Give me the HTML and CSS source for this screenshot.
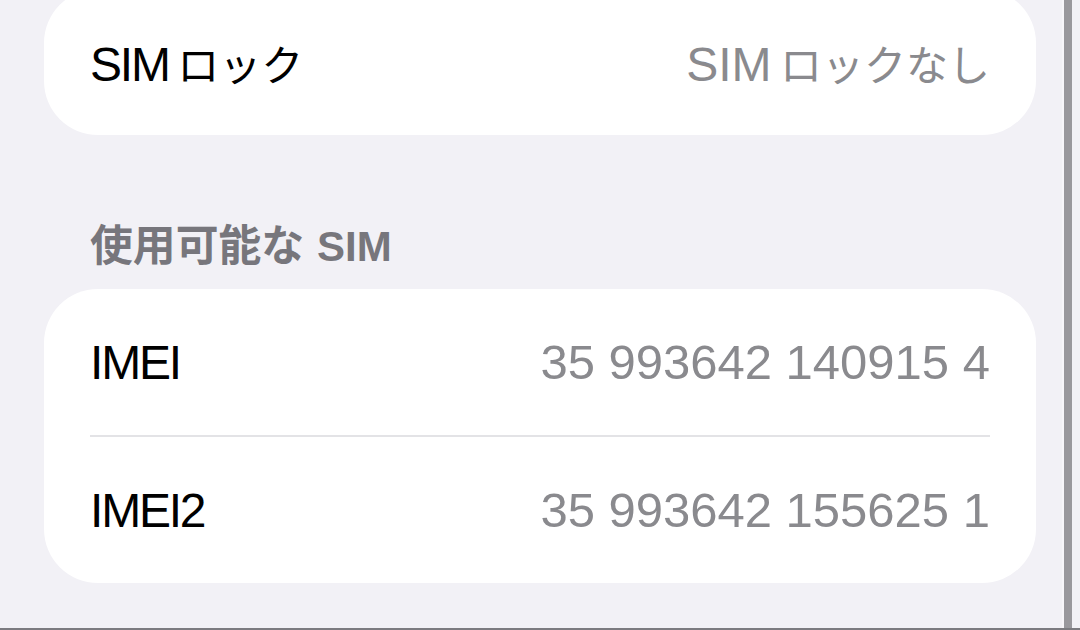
FILE: index.html
```html
<!DOCTYPE html>
<html lang="ja">
<head>
<meta charset="utf-8">
<title>SIM</title>
<link rel="stylesheet" href="styles.css">
</head>
<body>
<div class="screen">
  <main class="content">
    <section class="group group-first">
      <div class="row">
        <span class="label">SIM<span class="ja">ロック</span></span>
        <span class="value">SIM<span class="ja">ロックなし</span></span>
      </div>
    </section>

    <h2 class="section-title"><span class="ja">使用可能な</span>SIM</h2>

    <section class="group">
      <div class="row">
        <span class="label">IMEI</span>
        <span class="value num">35 993642 140915 4</span>
      </div>
      <div class="divider"></div>
      <div class="row">
        <span class="label">IMEI2</span>
        <span class="value num">35 993642 155625 1</span>
      </div>
    </section>
  </main>
  <div class="edge"></div>
</div>
</body>
</html>
```

FILE: styles.css
```css
* {
  box-sizing: border-box;
}

html, body {
  margin: 0;
  padding: 0;
}

body {
  width: 1080px;
  height: 630px;
  overflow: hidden;
  background: #f2f1f6;
  font-family: "Liberation Sans", "Noto Sans CJK JP", sans-serif;
}

.screen {
  display: flex;
  height: 630px;
  border-bottom: 2px solid #7c7b80;
}

.content {
  flex: 1;
  padding: 0 26px 0 44px;
  display: flex;
  flex-direction: column;
}

/* scroll edge on the right side */
.edge {
  width: 10px;
  margin-right: 8px;
  border-left: 2px solid #f7f6fa;
  background: #99989d;
}

.group {
  background: #ffffff;
  border-radius: 54px;
  overflow: hidden;
}

.group-first {
  margin-top: -11px;
}

.row {
  height: 146px;
  padding: 0 46px;
  display: flex;
  align-items: center;
  justify-content: space-between;
  font-size: 48px;
}

.label {
  color: #000000;
  letter-spacing: -2.2px;
}

.value {
  color: #8a8a8e;
}

.value.num {
  font-size: 49px;
  letter-spacing: 0;
}

.ja {
  font-family: "Noto Sans CJK JP", sans-serif;
  font-size: 0.875em;
  letter-spacing: 0;
  margin-left: 0.2em;
}

.divider {
  height: 2px;
  margin: 0 46px;
  background: #e3e3e6;
}

.section-title {
  margin: 77px 0 17px;
  padding-left: 46px;
  height: 60px;
  line-height: 60px;
  font-size: 42px;
  font-weight: 700;
  color: #77767c;
}

.section-title .ja {
  font-size: 1.02em;
  margin-left: 0;
  margin-right: 0.3em;
}
```
